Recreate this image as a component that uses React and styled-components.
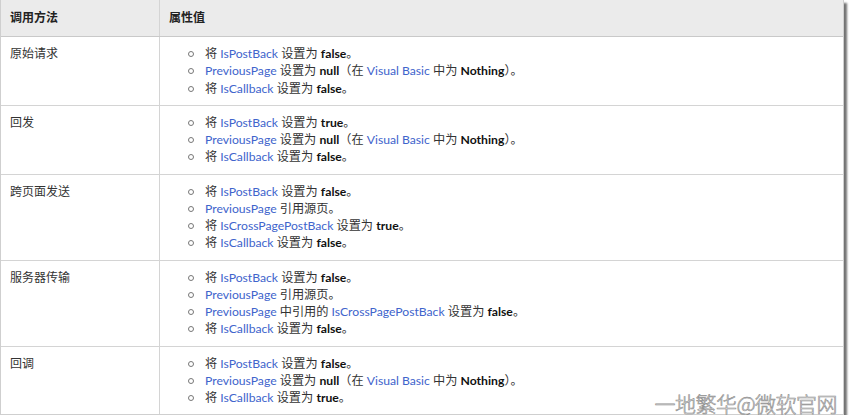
import React from 'react';
import styled, { createGlobalStyle } from 'styled-components';

const GlobalStyle = createGlobalStyle`
  body {
    margin: 0;
    background: #fff;
    font-family: Lato, "Noto Sans CJK SC", sans-serif;
    font-size: 12px;
    color: #333;
  }
`

const Frame = styled.div`
  position: relative;
  width: 842px;
  border-left: 1px solid #cfcfcf;
  border-right: 1px solid #cfcfcf;
  border-bottom: 1px solid #cfcfcf;
  box-shadow: 3px 3px 2px rgba(0, 0, 0, 0.55);
`

const Row = styled.div`
  display: grid;
  grid-template-columns: 158px 1fr;
  background: ${(p) => (p.head ? '#ebebeb' : '#fff')};
  border-bottom: ${(p) => (p.last ? 'none' : p.head ? '1px solid #c9c9c9' : '1px solid #d4d4d4')};
`

const Cell = styled.div`
  padding: ${(p) => (p.head ? '9px 9px 10px' : '8px 9px')};
  line-height: 17px;
  font-weight: ${(p) => (p.head ? 700 : 400)};
  color: ${(p) => (p.head ? '#222' : '#333')};
  & + & {
    border-left: 1px solid #d4d4d4;
  }
`

const List = styled.ul`
  margin: 0;
  padding: 0 0 0 36px;
  list-style: none;
`

const Item = styled.li`
  position: relative;
  height: 17.25px;
  line-height: 17px;
  font-size: 12.2px;
  white-space: nowrap;

  &::before {
    content: '';
    position: absolute;
    left: -17px;
    top: 6px;
    width: 4px;
    height: 4px;
    border: 1px solid #777;
    border-radius: 50%;
  }
`

const Link = styled.span`
  color: #4064cc;
`

const Strong = styled.b`
  font-weight: 700;
  color: #111;
`

const Watermark = styled.div`
  position: absolute;
  right: 6px;
  bottom: -4px;
  font-family: "Noto Sans CJK SC", sans-serif;
  font-size: 21px;
  font-weight: 300;
  color: #eeeeee;
  -webkit-text-stroke: 0.6px #8e8e8e;
  letter-spacing: -0.5px;
`

const postBack = (v) => (
  <Item>将 <Link>IsPostBack</Link> 设置为 <Strong>{v}</Strong>。</Item>
)
const callback = (v) => (
  <Item>将 <Link>IsCallback</Link> 设置为 <Strong>{v}</Strong>。</Item>
)
const prevNull = (
  <Item>
    <Link>PreviousPage</Link> 设置为 <Strong>null</Strong>（在 <Link>Visual Basic</Link> 中为 <Strong>Nothing</Strong>）。
  </Item>
)
const prevRef = <Item><Link>PreviousPage</Link> 引用源页。</Item>

const rows = [
  { method: '原始请求', items: [postBack('false'), prevNull, callback('false')] },
  { method: '回发', items: [postBack('true'), prevNull, callback('false')] },
  {
    method: '跨页面发送',
    items: [
      postBack('false'),
      prevRef,
      <Item>将 <Link>IsCrossPagePostBack</Link> 设置为 <Strong>true</Strong>。</Item>,
      callback('false'),
    ],
  },
  {
    method: '服务器传输',
    items: [
      postBack('false'),
      prevRef,
      <Item><Link>PreviousPage</Link> 中引用的 <Link>IsCrossPagePostBack</Link> 设置为 <Strong>false</Strong>。</Item>,
      callback('false'),
    ],
  },
  { method: '回调', items: [postBack('false'), prevNull, callback('true')] },
]

function App() {
  return (
    <React.Fragment>
      <GlobalStyle />
      <Frame>
        <Row head>
          <Cell head>调用方法</Cell>
          <Cell head>属性值</Cell>
        </Row>
        {rows.map((row, i) => (
          <Row key={`row_${i}`} last={i === rows.length - 1}>
            <Cell>{row.method}</Cell>
            <Cell>
              <List>
                {row.items.map((item, j) => (
                  <React.Fragment key={`item_${i}_${j}`}>{item}</React.Fragment>
                ))}
              </List>
            </Cell>
          </Row>
        ))}
        <Watermark>一地繁华@微软官网</Watermark>
      </Frame>
    </React.Fragment>
  )
}

export default App;
